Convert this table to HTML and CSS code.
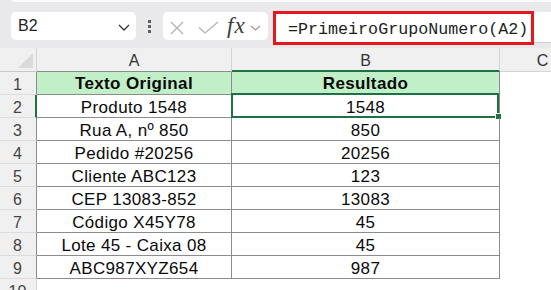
FILE: index.html
```html
<!DOCTYPE html>
<html lang="pt">
<head>
<meta charset="utf-8">
<title>Planilha</title>
<link rel="stylesheet" href="styles.css">
</head>
<body>
<div class="app">
  <div class="ribbon-edge"></div>
  <div class="toolbar">
    <div class="namebox">
      <span class="ref">B2</span>
      <svg class="nb-chev" width="12" height="7" viewBox="0 0 12 7"><path d="M1 1 L6 6 L11 1" fill="none" stroke="#333" stroke-width="1.3"/></svg>
    </div>
    <div class="kebab"><i></i><i></i><i></i></div>
    <div class="fbtns">
      <svg class="ic-x" width="14" height="14" viewBox="0 0 14 14"><path d="M1 1 L13 13 M13 1 L1 13" fill="none" stroke="#b3b3b3" stroke-width="1.3"/></svg>
      <svg class="ic-ok" width="21" height="13" viewBox="0 0 21 13"><path d="M1 6.5 L7 12 L20 1" fill="none" stroke="#b3b3b3" stroke-width="1.3"/></svg>
      <span class="fx">fx</span>
      <svg class="ic-chev" width="11" height="6" viewBox="0 0 11 6"><path d="M1 1 L5.5 5 L10 1" fill="none" stroke="#9c9c9c" stroke-width="1.2"/></svg>
    </div>
    <div class="fbar">
      <div class="highlight">=PrimeiroGrupoNumero(A2)</div>
    </div>
  </div>

  <div class="sheet">
    <div class="corner"><svg width="15" height="15" viewBox="0 0 15 15"><path d="M15 0 L15 15 L0 15 Z" fill="#dadada"/></svg></div>
    <div class="ch">A</div>
    <div class="ch ch-sel">B</div>
    <div class="ch ch-last">C</div>

    <div class="rh">1</div>
    <div class="c hdr">Texto Original</div>
    <div class="c hdr">Resultado</div>
    <div class="e"></div>

    <div class="rh rh-sel">2</div>
    <div class="c">Produto 1548</div>
    <div class="c active">1548<span class="sel"></span><span class="handle"></span></div>
    <div class="e"></div>

    <div class="rh">3</div>
    <div class="c">Rua A, nº 850</div>
    <div class="c">850</div>
    <div class="e"></div>

    <div class="rh">4</div>
    <div class="c">Pedido #20256</div>
    <div class="c">20256</div>
    <div class="e"></div>

    <div class="rh">5</div>
    <div class="c">Cliente ABC123</div>
    <div class="c">123</div>
    <div class="e"></div>

    <div class="rh">6</div>
    <div class="c">CEP 13083-852</div>
    <div class="c">13083</div>
    <div class="e"></div>

    <div class="rh">7</div>
    <div class="c">Código X45Y78</div>
    <div class="c">45</div>
    <div class="e"></div>

    <div class="rh">8</div>
    <div class="c">Lote 45 - Caixa 08</div>
    <div class="c">45</div>
    <div class="e"></div>

    <div class="rh">9</div>
    <div class="c">ABC987XYZ654</div>
    <div class="c">987</div>
    <div class="e"></div>

    <div class="rh rh-plain">10</div>
    <div class="e"></div>
    <div class="e"></div>
    <div class="e"></div>
  </div>
</div>
</body>
</html>
```

FILE: styles.css
```css
html, body {
  margin: 0;
  padding: 0;
  background: #ffffff;
  overflow: hidden;
}

.app {
  width: 551px;
  height: 290px;
  overflow: hidden;
  font-family: "Liberation Sans", Arial, sans-serif;
  color: #111;
  background: #ffffff;
}

.ribbon-edge {
  height: 2px;
  background: #e9e9eb;
}
.ribbon-edge::after {
  content: "";
  display: block;
  margin-left: 12px;
  height: 2px;
  background: #fbfbfb;
  border-bottom-left-radius: 3px;
}

.toolbar {
  height: 46px;
  box-sizing: border-box;
  background: #e9e9eb;
  display: flex;
  align-items: flex-start;
  padding-top: 10px;
  padding-left: 11px;
}

.namebox {
  width: 125px;
  height: 28px;
  box-sizing: border-box;
  background: #ffffff;
  border-radius: 5px;
  display: flex;
  align-items: center;
  padding-left: 7px;
  padding-right: 6px;
}
.ref {
  font-size: 16px;
  line-height: 28px;
  color: #222;
}
.nb-chev {
  margin-left: auto;
  margin-top: 2px;
}

.kebab {
  width: 3px;
  margin-left: 12px;
  margin-top: 8px;
  display: flex;
  flex-direction: column;
  gap: 2px;
}
.kebab i {
  display: block;
  width: 3px;
  height: 3px;
  background: #5f5f5f;
}

.fbtns {
  margin-left: 12px;
  width: 105px;
  height: 28px;
  box-sizing: border-box;
  background: #ffffff;
  border-radius: 5px;
  display: flex;
  align-items: center;
  padding-left: 7px;
}
.ic-x { margin-top: 3px; }
.ic-ok { margin-left: 14px; margin-top: 2px; }
.fx {
  margin-left: 8px;
  font-family: "Liberation Serif", "Times New Roman", serif;
  font-style: italic;
  font-size: 23px;
  letter-spacing: 1px;
  color: #3c3c3c;
  line-height: 28px;
}
.ic-chev { margin-left: 4px; margin-top: 3px; }

.fbar {
  flex: 1;
  margin-left: 5px;
  height: 31px;
  box-sizing: border-box;
  background: #ffffff;
  border-bottom: 1px solid #cfcfcf;
  display: flex;
  align-items: flex-start;
}
.highlight {
  margin-top: -1px;
  width: 261px;
  height: 34px;
  box-sizing: border-box;
  border: 3px solid #e5161d;
  padding-left: 12px;
  padding-top: 3px;
  font-family: "Liberation Mono", "Courier New", monospace;
  font-size: 16.7px;
  line-height: 25px;
  color: #1e1e1e;
  white-space: nowrap;
  flex-shrink: 0;
}

.sheet {
  display: grid;
  grid-template-columns: 37px 195px 268px 86px;
  grid-template-rows: 24px;
  grid-auto-rows: 23px;
}

.sheet > div {
  box-sizing: border-box;
  white-space: nowrap;
}

.corner {
  background: #f0f0f0;
  border-right: 1px solid #d4d4d4;
  border-bottom: 1px solid #c8c8c8;
  display: flex;
  align-items: flex-end;
  justify-content: flex-end;
  padding: 0 3px 3px 0;
}
.corner svg { display: block; }

.ch {
  background: #f0f0f0;
  border-right: 1px solid #d4d4d4;
  border-bottom: 1px solid #8c8c8c;
  text-align: center;
  font-size: 16px;
  line-height: 19px;
  padding-top: 3px;
  color: #333;
}
.ch-sel {
  border-bottom: 2px solid #1e7145;
}
.ch-last {
  border-bottom: 1px solid #d4d4d4;
}

.rh {
  background: #f0f0f0;
  border-right: 1px solid #8c8c8c;
  border-bottom: 1px solid #dcdcdc;
  text-align: center;
  font-size: 16px;
  line-height: 19px;
  padding-top: 3px;
  padding-right: 1px;
  color: #444;
}
.rh-sel {
  border-right: 2px solid #1e7145;
  padding-right: 0;
}
.rh-plain {
  border-right: 1px solid #d4d4d4;
}

.c {
  position: relative;
  border-right: 1px solid #8c8c8c;
  border-bottom: 1px solid #8c8c8c;
  text-align: center;
  font-size: 17px;
  letter-spacing: 0.35px;
  line-height: 19px;
  padding-top: 3px;
  color: #0a0a0a;
}
.hdr {
  background: #c1f0c8;
  font-weight: bold;
  padding-top: 2px;
}

.e {
  background: #ffffff;
}

.sel {
  position: absolute;
  top: -2px;
  left: -1px;
  right: 0;
  bottom: -1px;
  border: 2px solid #1e7145;
  pointer-events: none;
}
.handle {
  position: absolute;
  right: -3px;
  bottom: -3px;
  width: 5px;
  height: 5px;
  background: #1e7145;
  border: 1px solid #ffffff;
}
```
